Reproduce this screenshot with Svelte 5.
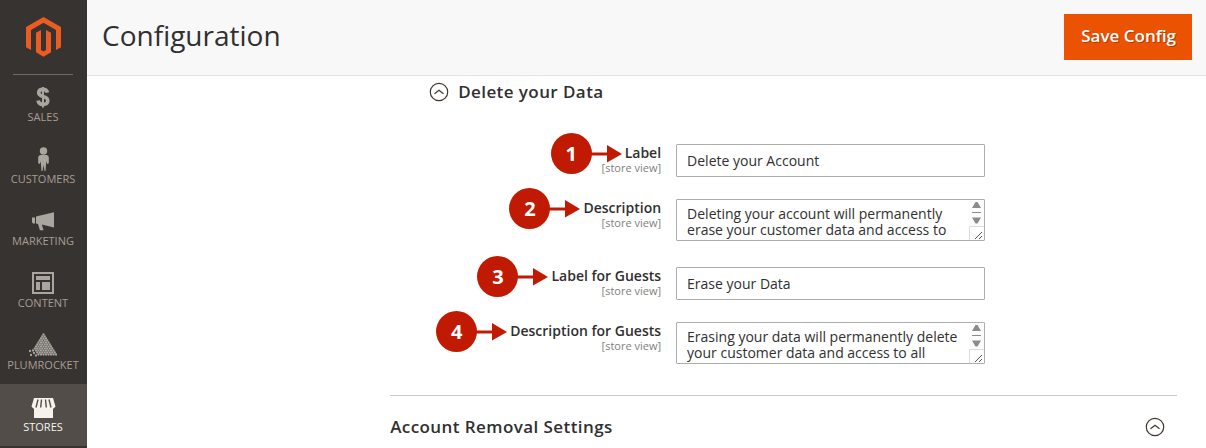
<script>
  const menu = [
    { id: 'sales', label: 'Sales' },
    { id: 'customers', label: 'Customers' },
    { id: 'marketing', label: 'Marketing' },
    { id: 'content', label: 'Content' },
    { id: 'plumrocket', label: 'Plumrocket' },
    { id: 'stores', label: 'Stores' }
  ];
  const active = 'stores';

  let fields = $state([
    { id: 'label', label: 'Label', type: 'text', value: 'Delete your Account' },
    {
      id: 'description',
      label: 'Description',
      type: 'textarea',
      value: 'Deleting your account will permanently erase your customer data and access to'
    },
    { id: 'guest-label', label: 'Label for Guests', type: 'text', value: 'Erase your Data' },
    {
      id: 'guest-description',
      label: 'Description for Guests',
      type: 'textarea',
      value: 'Erasing your data will permanently delete your customer data and access to all'
    }
  ]);

  // Rows of dots that build the Plumrocket triangle, plus its scattered tail.
  const dots = [];
  for (let row = 0; row < 11; row++) {
    for (let col = 0; col <= row; col++) {
      const x = 14.5 - row * 1.25 + col * 2.5;
      if (row > 7 && col < row - 7) continue;
      dots.push([x, 1.5 + row * 2]);
    }
  }
  dots.push([1, 18], [4, 17.5], [2, 22], [5, 20], [7, 22.5]);
</script>

{#snippet chevron()}
  <svg class="chevron" viewBox="0 0 20 20" aria-hidden="true">
    <circle cx="10" cy="10" r="8.7" />
    <path d="M5.5 11.8 10 8.2l4.500 3.600" />
  </svg>
{/snippet}

<div class="page">
  <aside>
    <a class="logo" href="#home" aria-label="Magento">
      <svg viewBox="0 0 35 40" aria-hidden="true">
        <path d="M17.500 0 35 10v20.200l-5 2.900V13L17.500 5.800 5 13v20.100l-5-2.900V10z" />
        <path d="m10 15.800 5-2.900v20.200l2.500 1.500 2.500-1.500V12.900l5 2.900v19.400l-7.500 4.500-7.500-4.500z" />
      </svg>
    </a>
    <nav>
      {#each menu as item}
        <a href={'#' + item.id} class={item.id} class:active={item.id === active}>
          <svg viewBox="0 0 28 24" aria-hidden="true">
            {#if item.id === 'sales'}
              <path class="line" stroke-width="3.600" d="M18.400 7.600C18 5.400 16.500 4.400 14 4.400c-2.600 0-4.300 1.200-4.300 3.400 0 2.300 1.800 3 4.300 3.700 2.700.7 4.800 1.500 4.800 4.100 0 2.400-1.900 3.800-4.800 3.800-2.700 0-4.600-1.300-4.900-3.900" />
              <path class="line" stroke-width="2" d="M14 2v20.500" />
            {:else if item.id === 'customers'}
              <circle cx="14.500" cy="4" r="3.700" />
              <path d="M11.500 8h6q2.300 0 2.300 2.500v5.700l-1.700.7-.8-2.600-.8 9.700h-1l-1-6-1 6h-1l-.8-9.700-.8 2.600-1.700-.7v-5.700Q9.200 8 11.500 8z" />
            {:else if item.id === 'marketing'}
              <path d="M3 8.500h3v6H4L3 13.200zM7 7.500l18-4.300v15.300L12.800 15.600l1.800 5.700h-3.700L9 15 7 14.500z" />
            {:else if item.id === 'content'}
              <path class="line" stroke-width="2" d="M4 2h20v20H4z" />
              <path d="M7 5h14v4H7zM7 11h4v8H7zM13 11h8v8h-8z" />
            {:else if item.id === 'plumrocket'}
              {#each dots as [x, y]}
                <circle cx={x} cy={y} r="1.150" />
              {/each}
            {:else}
              <path d="M5 3h19l2.500 8.500-1.800 2H24V23H5v-9.500h-.7l-1.800-2z" />
              <path class="gap" d="m9 4.500-2 8M12.500 4.500l-.8 8M16.500 4.500l.8 8M20 4.500l2 8" />
            {/if}
          </svg>
          <span>{item.label}</span>
        </a>
      {/each}
    </nav>
  </aside>

  <div class="body">
    <header>
      <h1>Configuration</h1>
      <button class="save" type="button">Save Config</button>
    </header>

    <main>
      <section class="fields">
        <h2><button type="button" class="toggle">{@render chevron()}Delete your Data</button></h2>
        {#each fields as field, i}
          <div class="row">
            <div class="caption">
              <label for={field.id}>
                <span class="marker" aria-hidden="true">
                  <b>{i + 1}</b>
                  <svg viewBox="0 0 31 18"><path d="M0 7.500h16V0l15 9-15 8.500V10.500H0z" /></svg>
                </span>
                {field.label}
              </label>
              <small>[store view]</small>
            </div>
            {#if field.type === 'text'}
              <input id={field.id} type="text" bind:value={field.value} />
            {:else}
              <div class="area">
                <textarea id={field.id} rows="2" bind:value={field.value}></textarea>
                <svg class="scroll" viewBox="0 0 15 40" aria-hidden="true">
                  <path class="track" d="M0 0h15v40H0z" />
                  <path class="arrow" d="M3 8 6.500 2h2L12 8zM3 17.500h9l-3.500 6h-2z" />
                  <path class="thumb" d="M3 12.500h9" />
                  <path class="corner" d="M.5 40V26.500H15" />
                  <path class="grip" d="m6 39 7-7M10 39l3-3" />
                </svg>
              </div>
            {/if}
          </div>
        {/each}
      </section>

      <section class="next">
        <h2><button type="button" class="toggle spread">Account Removal Settings{@render chevron()}</button></h2>
      </section>
    </main>
  </div>
</div>

<style>
  :global(body) {
    margin: 0;
    background: #fff;
  }
  .page {
    display: flex;
    min-height: 100vh;
    color: #303030;
    font-family: 'Open Sans', 'Noto Sans', sans-serif;
    font-size: 14px;
  }
  .page :global(*) {
    box-sizing: border-box;
  }
  aside {
    flex: 0 0 87px;
    background: #373330;
  }
  .logo {
    display: flex;
    justify-content: center;
    margin: 0 14px 0 13px;
    padding: 17px 0;
    border-bottom: 1px solid #736963;
  }
  .logo svg {
    width: 35px;
    height: 40px;
    fill: #eb5c22;
  }
  nav {
    margin-top: -1px;
  }
  nav a {
    display: flex;
    flex-direction: column;
    align-items: center;
    height: 62px;
    padding: 11px 1px 0 0;
    color: #a79d95;
    fill: #aaa59f;
    stroke: none;
    font-size: 11px;
    line-height: 14px;
    text-decoration: none;
    text-transform: uppercase;
  }
  nav svg {
    width: 28px;
    height: 24px;
    margin-bottom: 1px;
  }
  nav .line {
    fill: none;
    stroke: #aaa59f;
  }
  nav .gap {
    fill: none;
    stroke: #524d49;
    stroke-width: 1.4;
  }
  nav .active {
    background: #524d49;
    color: #f7f3eb;
    fill: #f7f3eb;
  }
  .body {
    flex: 1;
    min-width: 0;
  }
  header {
    display: flex;
    align-items: center;
    justify-content: space-between;
    height: 76px;
    padding: 0 14px 2px 15px;
    border-bottom: 1px solid #e3e3e3;
    background: #f8f8f8;
  }
  h1 {
    margin: 0 0 4px;
    font-size: 28px;
    font-weight: 400;
    line-height: 36px;
  }
  .save {
    padding: 10px 16px 12px 17px;
    border: 0;
    background: #eb5202;
    color: #fff;
    font: 600 17px/24px 'Open Sans', 'Noto Sans', sans-serif;
    text-shadow: 1px 1px 0 rgba(0, 0, 0, 0.25);
  }
  main {
    padding: 4px 29px 0 calc(27% + 1px);
  }
  h2 {
    margin: 0;
  }
  .toggle {
    display: flex;
    align-items: center;
    gap: 9px;
    padding: 0;
    border: 0;
    background: none;
    color: #303030;
    font: 600 17px/24px 'Open Sans', 'Noto Sans', sans-serif;
    letter-spacing: 0.025em;
  }
  .spread {
    width: 100%;
    justify-content: space-between;
    padding-right: 12px;
  }
  .chevron {
    width: 20px;
    height: 20px;
    fill: none;
    stroke: #41362f;
    stroke-width: 1.2;
  }
  .fields {
    padding-bottom: 27px;
  }
  .fields h2 {
    padding: 0 0 40px 39px;
  }
  .row {
    display: grid;
    grid-template-columns: 271fr 309fr 177fr;
    column-gap: 15px;
    align-items: start;
  }
  .row + .row {
    margin-top: 22px;
  }
  .caption {
    display: flex;
    flex-direction: column;
    align-items: flex-end;
    white-space: nowrap;
  }
  label {
    position: relative;
    font-weight: 600;
    line-height: 18px;
  }
  small {
    color: #808080;
    font-size: 11px;
    line-height: 12px;
  }
  .marker {
    position: absolute;
    top: -11px;
    right: 100%;
    display: flex;
    align-items: center;
    margin-right: 3px;
  }
  .marker b {
    width: 41px;
    height: 41px;
    border-radius: 50%;
    background: #c11a02;
    color: #fff;
    font-size: 20px;
    font-weight: 700;
    line-height: 41px;
    text-align: center;
  }
  .marker svg {
    width: 31px;
    height: 18px;
    margin-left: -1px;
    fill: #c11a02;
  }
  input,
  textarea {
    display: block;
    width: 100%;
    border: 1px solid #adadad;
    border-radius: 1px;
    background: #fff;
    color: #303030;
    font: 400 14px/16px 'Open Sans', 'Noto Sans', sans-serif;
  }
  input {
    height: 33px;
    padding: 0 10px;
  }
  textarea {
    height: 42px;
    padding: 6px 20px 0 10px;
    overflow: hidden;
    resize: none;
  }
  .area {
    position: relative;
    padding-bottom: 4px;
  }
  .scroll {
    position: absolute;
    top: 1px;
    right: 1px;
    width: 15px;
    height: 40px;
    fill: none;
  }
  .track {
    fill: #fcfcfc;
  }
  .arrow {
    fill: #8b8b8b;
  }
  .thumb {
    stroke: #8b8b8b;
  }
  .corner {
    fill: #fff;
    stroke: #dcdcdc;
  }
  .grip {
    stroke: #555;
  }
  .next {
    padding: 19px 0 8px;
    border-top: 1px solid #ccc;
  }
</style>
